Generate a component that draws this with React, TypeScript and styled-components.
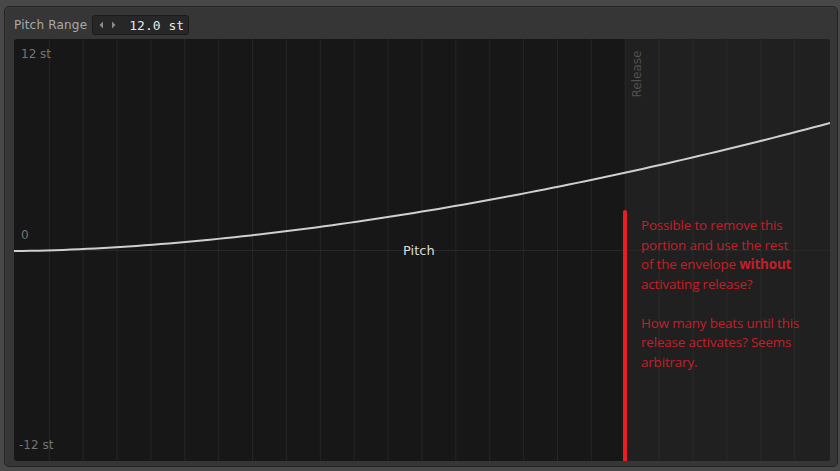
import React from "react";
import styled, { createGlobalStyle } from "styled-components";

const GlobalStyle = createGlobalStyle`
  html, body { margin: 0; padding: 0; background: #484848; }
  body { font-family: "DejaVu Sans", "Noto Sans", sans-serif; }
  * { box-sizing: border-box; }
`;

const Page = styled.div`
  width: 840px;
  height: 471px;
  padding: 6px 2px 4px 4px;
  background: #484848;
`;

const Panel = styled.div`
  height: 461px;
  background: #363636;
  border: 1px solid #232323;
  border-radius: 5px;
  padding: 8px 7px 5px 9px;
  display: flex;
  flex-direction: column;
  gap: 4px;
  box-shadow: inset 1px 1px 0 #3c3c3c;
`;

const Header = styled.div`
  display: flex;
  align-items: center;
  gap: 5px;
  height: 20px;
`;

const Label = styled.span`
  font-size: 12px;
  color: #a8a8a8;
  letter-spacing: 0.2px;
  white-space: nowrap;
`;

const ValueBox = styled.div`
  display: flex;
  align-items: center;
  height: 20px;
  width: 97px;
  padding: 0 4px 0 6px;
  background: #272727;
  border: 1px solid #1a1a1a;
  border-radius: 3px;
  gap: 13px;
`;

const Arrows = styled.svg`
  flex: none;
`;

const Value = styled.span`
  font-family: "DejaVu Sans Mono", "Liberation Mono", monospace;
  font-size: 13px;
  color: #e6e6e6;
  white-space: nowrap;
`;

const Graph = styled.div`
  position: relative;
  width: 816px;
  height: 423px;
  border-radius: 3px;
  overflow: hidden;
  background: #171717;
`;

const Chart = styled.svg`
  display: block;
`;

const AxisLabel = styled.span<{ $top: number; $left: number }>`
  position: absolute;
  top: ${(p) => p.$top}px;
  left: ${(p) => p.$left}px;
  font-size: 12px;
  color: #747474;
  line-height: 14px;
`;

const PitchLabel = styled.span`
  position: absolute;
  top: 204px;
  left: 389px;
  font-size: 13px;
  color: #dcdcdc;
  line-height: 16px;
`;

const ReleaseLabel = styled.span`
  position: absolute;
  top: 28px;
  left: 598px;
  width: 50px;
  font-size: 12px;
  line-height: 14px;
  color: #505050;
  transform: rotate(-90deg);
  transform-origin: center;
  text-align: center;
`;

const Annotation = styled.div`
  position: absolute;
  left: 609px;
  top: 171px;
  bottom: 0;
  display: flex;
  gap: 14px;
`;

const RedBar = styled.div`
  flex: none;
  width: 4px;
  background: #ec1c24;
  border-radius: 2px 2px 0 0;
`;

const Note = styled.div`
  width: 160px;
  padding-top: 6px;
  font-family: "Open Sans", "Noto Sans", sans-serif;
  font-size: 13.4px;
  line-height: 19.5px;
  color: #c41f27;
  letter-spacing: -0.15px;
  p { margin: 0 0 19.5px 0; }
  b { font-weight: 700; }
`;

const W = 816;
const H = 423;
const RELEASE_X = 611.7;
const GRID_START = 35.3;
const GRID_STEP = 33.88;
const ZERO_Y = 211.5;

function curvePath() {
  const pts: string[] = [];
  for (let i = 0; i <= 100; i++) {
    const t = i / 100;
    const x = t * W;
    const y = 212 - 128 * Math.pow(t, 1.7);
    pts.push(`${i === 0 ? "M" : "L"}${x.toFixed(2)} ${y.toFixed(2)}`);
  }
  return pts.join(" ");
}

export default function App() {
  const lines: number[] = [];
  for (let k = 0; k <= 22; k++) lines.push(GRID_START + k * GRID_STEP);
  return (
    <>
      <GlobalStyle />
      <Page>
        <Panel>
          <Header>
            <Label>Pitch Range</Label>
            <ValueBox>
              <Arrows width="17" height="8" viewBox="0 0 17 8">
                <path d="M4 0.5 L0.5 4 L4 7.5 Z" fill="#8a8a8a" />
                <path d="M13 0.5 L16.5 4 L13 7.5 Z" fill="#8a8a8a" />
              </Arrows>
              <Value>12.0 st</Value>
            </ValueBox>
          </Header>
          <Graph>
            <Chart width={W} height={H} viewBox={`0 0 ${W} ${H}`}>
              <rect x={RELEASE_X} y={0} width={W - RELEASE_X} height={H} fill="#202020" />
              {lines.map((x, i) => (
                <line
                  key={i}
                  x1={x}
                  x2={x}
                  y1={0}
                  y2={H}
                  stroke={x > RELEASE_X - 1 ? "#2b2b2b" : "#262626"}
                  strokeWidth={1}
                />
              ))}
              <line x1={0} x2={W} y1={ZERO_Y} y2={ZERO_Y} stroke="#282828" strokeWidth={1} />
              <path d={curvePath()} fill="none" stroke="#cfcfcf" strokeWidth={2} />
            </Chart>
            <AxisLabel $top={8} $left={7}>12 st</AxisLabel>
            <AxisLabel $top={189} $left={7}>0</AxisLabel>
            <AxisLabel $top={399} $left={5}>-12 st</AxisLabel>
            <PitchLabel>Pitch</PitchLabel>
            <ReleaseLabel>Release</ReleaseLabel>
            <Annotation>
              <RedBar />
              <Note>
                <p>
                  Possible to remove this portion and use the rest of the envelope <b>without</b> activating release?
                </p>
                <p>How many beats until this release activates? Seems arbitrary.</p>
              </Note>
            </Annotation>
          </Graph>
        </Panel>
      </Page>
    </>
  );
}
